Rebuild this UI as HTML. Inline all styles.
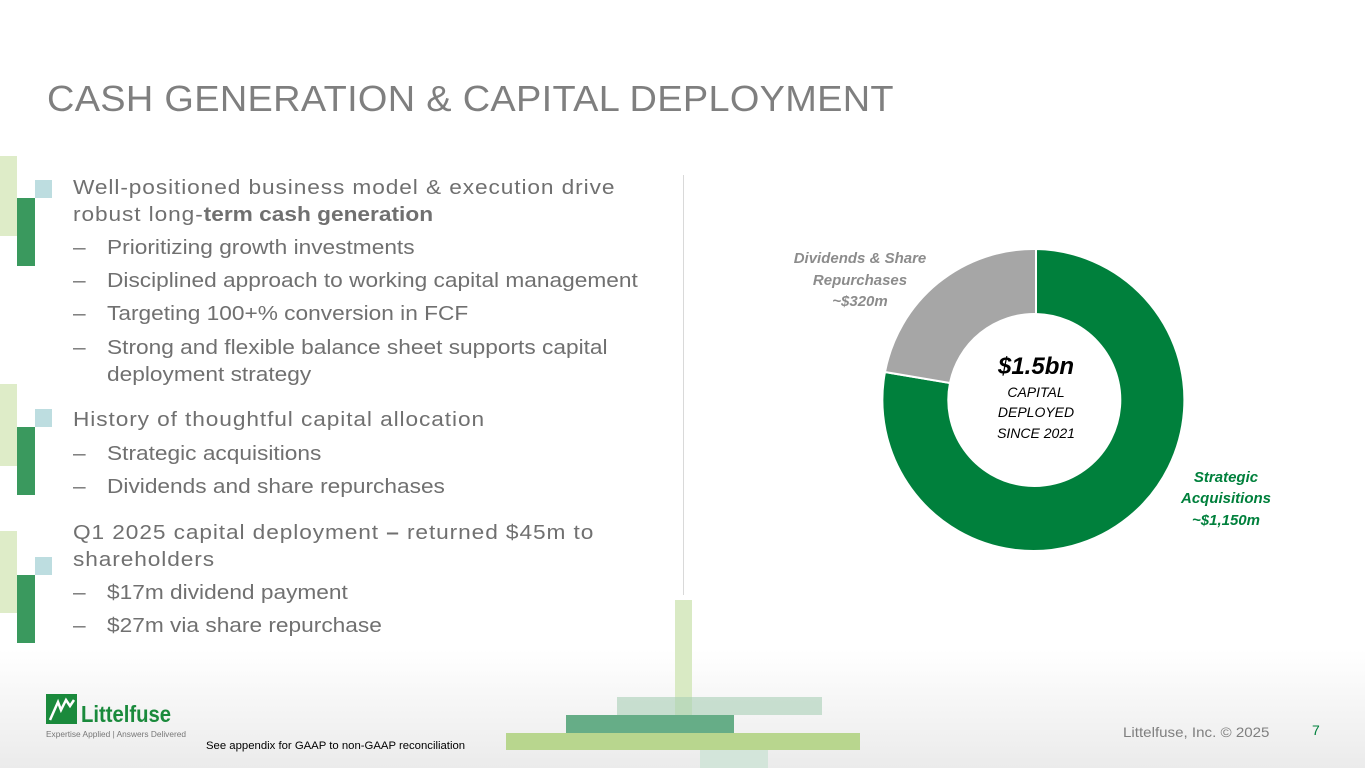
<!DOCTYPE html>
<html><head><meta charset="utf-8"><style>
*{margin:0;padding:0;box-sizing:border-box}
body{width:1365px;height:768px;position:relative;overflow:hidden;font-family:"Liberation Sans",sans-serif;color:#707070;background:linear-gradient(#fff 0,#fff 650px,#ebebeb 768px)}
.a{position:absolute}
h1{position:absolute;left:47px;top:78px;font-size:36px;font-weight:normal;color:#7f7f7f;letter-spacing:0.3px;transform:scaleX(1.053);transform-origin:0 0;white-space:nowrap}
.t{position:absolute;font-size:20px;line-height:27px;white-space:nowrap;transform:scaleX(1.134);transform-origin:0 0}
.h{letter-spacing:0.8px}
.d{left:73px}
.d span{position:absolute;left:30px}
</style></head><body>
<h1>CASH GENERATION &amp; CAPITAL DEPLOYMENT</h1>
<div class="a" style="left:0;top:156px;width:17px;height:80px;background:#deecc8"></div>
<div class="a" style="left:17px;top:198px;width:18px;height:68px;background:#3a995e"></div>
<div class="a" style="left:35px;top:180px;width:17px;height:18px;background:#bddde0"></div>
<div class="a" style="left:0;top:384px;width:17px;height:82px;background:#deecc8"></div>
<div class="a" style="left:17px;top:427px;width:18px;height:68px;background:#3a995e"></div>
<div class="a" style="left:35px;top:409px;width:17px;height:18px;background:#bddde0"></div>
<div class="a" style="left:0;top:531px;width:17px;height:82px;background:#deecc8"></div>
<div class="a" style="left:17px;top:575px;width:18px;height:68px;background:#3a995e"></div>
<div class="a" style="left:35px;top:557px;width:17px;height:18px;background:#bddde0"></div>

<div class="t h" style="left:73px;top:175px">Well-positioned business model &amp; execution drive<br>robust long-<b style="letter-spacing:0">term cash generation</b></div>
<div class="t d" style="top:235px">–<span>Prioritizing growth investments</span></div>
<div class="t d" style="top:268px">–<span>Disciplined approach to working capital management</span></div>
<div class="t d" style="top:301px">–<span>Targeting 100+% conversion in FCF</span></div>
<div class="t d" style="top:335px">–<span>Strong and flexible balance sheet supports capital<br>deployment strategy</span></div>
<div class="t h" style="left:73px;top:407px">History of thoughtful capital allocation</div>
<div class="t d" style="top:441px">–<span>Strategic acquisitions</span></div>
<div class="t d" style="top:474px">–<span>Dividends and share repurchases</span></div>
<div class="t h" style="left:73px;top:520px">Q1 2025 capital deployment <b>–</b> returned $45m to<br>shareholders</div>
<div class="t d" style="top:580px">–<span>$17m dividend payment</span></div>
<div class="t d" style="top:613px">–<span>$27m via share repurchase</span></div>

<div class="a" style="left:683px;top:175px;width:1px;height:420px;background:#d9d9d9"></div>

<svg class="a" style="left:0;top:0" width="1365" height="768">
<path d="M1036 249 A151 151 0 1 1 885 372 L950 383 A86 86 0 1 0 1036 314 Z" fill="#00803c" stroke="#fff" stroke-width="2"/>
<path d="M885 372 A151 151 0 0 1 1036 249 L1036 314 A86 86 0 0 0 950 383 Z" fill="#a6a6a6" stroke="#fff" stroke-width="2"/>
<g font-family="'Liberation Sans',sans-serif" font-style="italic" text-anchor="middle">
<text x="1036" y="374" font-size="24" font-weight="bold" fill="#000">$1.5bn</text>
<text x="1036" y="397" font-size="14" fill="#000">CAPITAL</text>
<text x="1036" y="417" font-size="14" fill="#000">DEPLOYED</text>
<text x="1036" y="438" font-size="14" fill="#000">SINCE 2021</text>
<g font-size="15" font-weight="bold" fill="#8c8c8c">
<text x="860" y="263">Dividends &amp; Share</text>
<text x="860" y="285">Repurchases</text>
<text x="860" y="306">~$320m</text></g>
<g font-size="15" font-weight="bold" fill="#00803c">
<text x="1226" y="482">Strategic</text>
<text x="1226" y="503">Acquisitions</text>
<text x="1226" y="525">~$1,150m</text></g>
</g>
<rect x="675" y="600" width="17" height="116" fill="#d9eac4"/>
<rect x="617" y="697" width="205" height="18" fill="#a9cfb6" opacity="0.6"/>
<rect x="566" y="715" width="168" height="18" fill="#66ad87"/>
<rect x="506" y="733" width="354" height="17" fill="#b8d68e"/>
<rect x="700" y="750" width="68" height="18" fill="#d3e5da"/>
<rect x="46" y="694" width="31" height="30" fill="#1a8a3c"/>
<path d="M50 720 L58 702 L61 710 L66 700 L70 706 L74 700" stroke="#fff" stroke-width="2.5" fill="none"/>
<text x="81" y="722" font-family="'Liberation Sans',sans-serif" font-weight="bold" font-size="23" fill="#1a8a3c" textLength="90" lengthAdjust="spacingAndGlyphs">Littelfuse</text>
<text x="46" y="737" font-family="'Liberation Sans',sans-serif" font-size="8.5" fill="#777" textLength="140" lengthAdjust="spacingAndGlyphs">Expertise Applied | Answers Delivered</text>
</svg>
<div class="a" style="left:206px;top:740px;font-size:11px;color:#000;transform:scaleX(1.03);transform-origin:0 0">See appendix for GAAP to non-GAAP reconciliation</div>
<div class="a" style="left:1123px;top:724px;font-size:14px;color:#7f7f7f;transform:scaleX(1.08);transform-origin:0 0">Littelfuse, Inc. © 2025</div>
<div class="a" style="left:1312px;top:722px;font-size:14px;color:#00803c">7</div>
</body></html>
